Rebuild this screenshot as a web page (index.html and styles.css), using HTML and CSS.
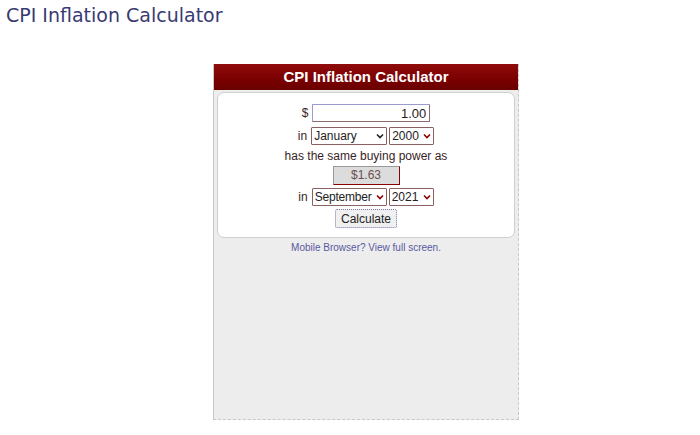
FILE: index.html
```html
<!DOCTYPE html>
<html>
<head>
<meta charset="utf-8">
<title>CPI Inflation Calculator</title>
<link rel="stylesheet" href="styles.css">
</head>
<body>
<h1 class="page-title">CPI Inflation Calculator</h1>
<div class="stage">
  <div class="panel">
    <div class="panel-head">CPI Inflation Calculator</div>
    <div class="calc">
      <div class="row r-amount">
        <span class="lbl">$</span>
        <input class="amount" type="text" value="1.00">
      </div>
      <div class="row r-from">
        <span class="lbl">in</span>
        <span class="sel sel-month">
          <select><option>January</option></select>
          <svg class="chev" viewBox="0 0 8 6" width="8" height="6"><path d="M1 1.5 L4 4.5 L7 1.5" fill="none" stroke="#222" stroke-width="1.6"/></svg>
        </span>
        <span class="sel sel-year">
          <select><option>2000</option></select>
          <svg class="chev" viewBox="0 0 8 6" width="8" height="6"><path d="M1 1.5 L4 4.5 L7 1.5" fill="none" stroke="#8b0000" stroke-width="1.6"/></svg>
        </span>
      </div>
      <div class="row text">has the same buying power as</div>
      <div class="row r-result">
        <div class="result">$1.63</div>
      </div>
      <div class="row r-to">
        <span class="lbl">in</span>
        <span class="sel sel-month2">
          <select><option>September</option></select>
          <svg class="chev" viewBox="0 0 8 6" width="8" height="6"><path d="M1 1.5 L4 4.5 L7 1.5" fill="none" stroke="#8b0000" stroke-width="1.6"/></svg>
        </span>
        <span class="sel sel-year">
          <select><option>2021</option></select>
          <svg class="chev" viewBox="0 0 8 6" width="8" height="6"><path d="M1 1.5 L4 4.5 L7 1.5" fill="none" stroke="#8b0000" stroke-width="1.6"/></svg>
        </span>
      </div>
      <div class="row r-btn">
        <button class="btn" type="button">Calculate</button>
      </div>
    </div>
    <div class="mobile"><a href="#">Mobile Browser? View full screen.</a></div>
  </div>
</div>
</body>
</html>
```
FILE: styles.css
```css
html, body {
  margin: 0;
  padding: 0;
  background: #fff;
}
body {
  font-family: "Liberation Sans", Arial, sans-serif;
}
.page-title {
  margin: 0;
  padding: 3px 0 0 6px;
  font-family: "DejaVu Sans", Tahoma, sans-serif;
  font-weight: normal;
  font-size: 19px;
  line-height: 24px;
  color: #3a3a72;
}
.stage {
  padding: 37px 0 0 213px;
}
.panel {
  width: 304px;
  height: 355px;
  background: #ededed;
  border-left: 1px solid #c8c8c8;
  border-right: 1px dashed #c8c8c8;
  border-bottom: 1px dashed #c8c8c8;
}
.panel-head {
  height: 26px;
  line-height: 25px;
  text-align: center;
  color: #fff;
  font-weight: bold;
  font-size: 15px;
  background: linear-gradient(#900c0c, #7a0000 60%, #6a0000);
}
.calc {
  margin: 2px 3px 0 3px;
  background: #fff;
  border: 1px solid #cfcfcf;
  border-radius: 7px;
  padding: 11px 0 9px 0;
  display: flex;
  flex-direction: column;
  align-items: center;
}
.row {
  display: flex;
  align-items: center;
  justify-content: center;
  gap: 2px;
  font-size: 12px;
  color: #3a1e26;
}
.r-from { margin-top: 5px; }
.text { margin-top: 4px; line-height: 14px; }
.r-result { margin-top: 3px; }
.r-to { margin-top: 3px; }
.r-btn { margin-top: 3px; }
.lbl {
  margin-right: 2px;
}
.amount {
  box-sizing: border-box;
  width: 118px;
  height: 18px;
  border: 1px solid #8a6a6a;
  border-left-color: #9a9ad0;
  border-top-color: #9a9ad0;
  padding: 0 3px;
  text-align: right;
  font-family: "Liberation Sans", Arial, sans-serif;
  font-size: 13px;
  color: #2a1a1a;
  background: #fff;
  border-radius: 1px;
  margin: 0;
}
.sel {
  position: relative;
  display: inline-block;
}
.sel select {
  -webkit-appearance: none;
  appearance: none;
  box-sizing: border-box;
  height: 18px;
  border: 1px solid #8a6060;
  border-radius: 1px;
  background: #fff;
  font-family: "Liberation Sans", Arial, sans-serif;
  font-size: 12px;
  color: #222;
  padding: 0 0 0 2px;
  margin: 0;
  display: block;
}
.sel-month select { width: 76px; }
.sel-month2 select { width: 75px; letter-spacing: -0.2px; }
.sel-year select { width: 45px; }
.chev {
  position: absolute;
  right: 3px;
  top: 6px;
}
.result {
  box-sizing: border-box;
  width: 67px;
  height: 19px;
  line-height: 17px;
  text-align: center;
  font-size: 12px;
  color: #6a5050;
  background: #dcdcdc;
  border: 1px solid #999;
  border-right-color: #8b0000;
  border-bottom-color: #8b0000;
}
.btn {
  box-sizing: border-box;
  width: 62px;
  height: 19px;
  padding: 0;
  font-family: "Liberation Sans", Arial, sans-serif;
  font-size: 12px;
  color: #222;
  background: #f0f0f0;
  border: 1px dotted #7a7ab0;
  border-radius: 2px;
  margin: 0;
}
.mobile {
  text-align: center;
  margin-top: 3px;
  font-size: 10px;
  line-height: 13px;
}
.mobile a {
  color: #5a5aa0;
  text-decoration: none;
}
```
